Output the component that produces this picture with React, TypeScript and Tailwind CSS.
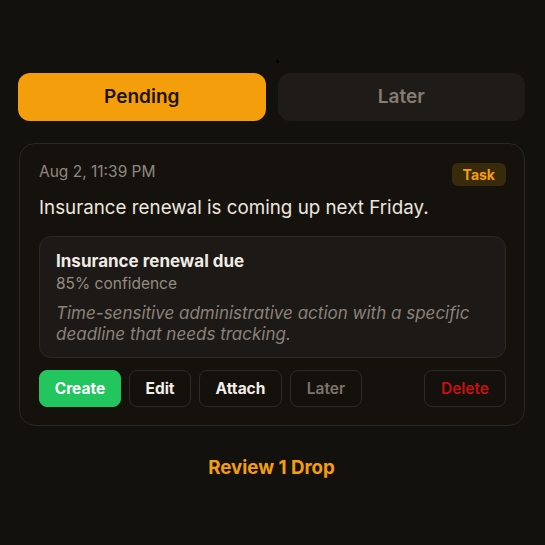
import React from 'react'

/* Drop review panel — pending / later tabs with a single suggestion card */

function Tabs() {
  return (
    <div className="grid grid-cols-2 gap-3">
      <button className="h-12 rounded-xl bg-[#f59e0b] pt-px text-[19px] font-semibold text-[#1c1307]">
        Pending
      </button>
      <button className="h-12 rounded-xl bg-[#1e1b18] pt-px text-[19px] font-semibold text-[#857c73]">
        Later
      </button>
    </div>
  )
}

interface ActionProps {
  children: React.ReactNode
  variant?: 'primary' | 'default' | 'muted' | 'danger'
  className?: string
}

function Action({ children, variant = 'default', className = '' }: ActionProps) {
  const styles = {
    primary: 'bg-[#22c55e] border-[#22c55e] text-white font-bold',
    default: 'bg-[#14110d] border-[#2e2a25] text-[#f2ede6] font-bold',
    muted: 'bg-[#14110d] border-[#2e2a25] text-[#7d756c] font-semibold',
    danger: 'bg-[#14110d] border-[#2e2a25] text-[#c81010] font-semibold',
  }
  return (
    <button className={`h-[37px] rounded-lg border text-[15.5px] ${styles[variant]} ${className}`}>
      {children}
    </button>
  )
}

function DropCard() {
  return (
    <div className="rounded-2xl border border-[#2a2621] bg-[#15120e] pl-[19px] pr-[18px] pt-4 pb-[18px]">
      <div className="flex items-start justify-between">
        <span className="text-[15.5px] leading-6 text-[#8f877e]">Aug 2, 11:39 PM</span>
        <span className="mt-[3px] rounded-md bg-[#3a2a0c] px-[11px] py-[2px] text-[14px] leading-[19px] font-bold text-[#f59e0b]">
          Task
        </span>
      </div>
      <p className="mt-[9px] text-[18.8px] leading-[26px] text-[#ece6de]">
        Insurance renewal is coming up next Friday.
      </p>

      <div className="mt-[15px] rounded-xl border border-[#2c2823] bg-[#1c1916] px-4 pt-3 pb-3">
        <p className="text-[17px] font-bold leading-[25px] text-[#f0ebe4]">Insurance renewal due</p>
        <p className="text-[15.5px] leading-5 text-[#958c82]">85% confidence</p>
        <p className="mt-[9px] text-[17px] italic leading-[21px] text-[#8b8279]">
          Time-sensitive administrative action with a specific deadline that needs tracking.
        </p>
      </div>

      <div className="mt-3 flex items-center gap-2">
        <Action variant="primary" className="w-[82px]">Create</Action>
        <Action className="w-[62px]">Edit</Action>
        <Action className="w-[83px]">Attach</Action>
        <Action variant="muted" className="w-[72px]">Later</Action>
        <Action variant="danger" className="ml-auto w-[82px]">Delete</Action>
      </div>
    </div>
  )
}

export default function App() {
  return (
    <div
      className="relative min-h-[545px] w-full bg-[#13110e] pl-[18px] pr-5 pt-[73px]"
      style={{ fontFamily: 'Inter, "Noto Sans", sans-serif' }}
    >
      <span className="absolute left-[276px] top-[60px] h-[3px] w-[3px] rounded-full bg-black" />
      <Tabs />
      <div className="mt-[22px] pl-px">
        <DropCard />
      </div>
      <p className="mt-7 text-center text-[18.7px] font-bold leading-7 text-[#f59e0b]">
        Review 1 Drop
      </p>
    </div>
  )
}
